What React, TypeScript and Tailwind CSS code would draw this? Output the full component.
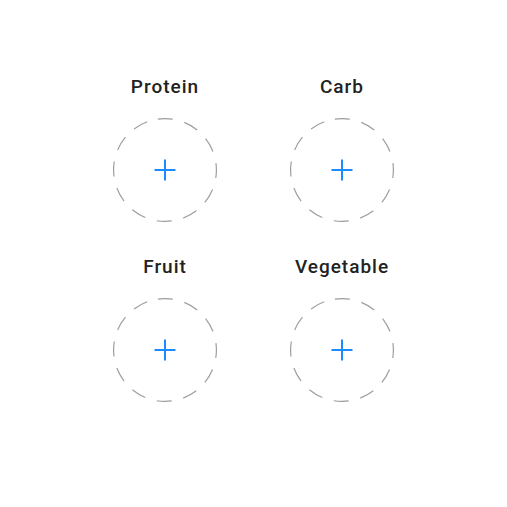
import React from "react";

const items = ["Protein", "Carb", "Fruit", "Vegetable"];

function Slot({ label }: { label: string }) {
  return (
    <div className="flex flex-col items-center">
      <div className="text-[19px] leading-[22px] font-medium tracking-[1px] text-[#222222] whitespace-nowrap">{label}</div>
      <button className="mt-[20px] w-[104px] h-[104px] relative flex items-center justify-center">
        <svg width="104" height="104" viewBox="0 0 104 104" className="absolute inset-0">
          <circle cx="52" cy="52" r="51.4" fill="none" stroke="#9e9e9e" strokeWidth="1.2" strokeDasharray="15 11.95" transform="rotate(-98 52 52)" />
        </svg>
        <svg width="24" height="24" viewBox="0 0 24 24" className="relative">
          <path d="M12 1.5V22.5M1.5 12H22.5" stroke="#1a8cff" strokeWidth="2" fill="none" />
        </svg>
      </button>
    </div>
  );
}

export default function App() {
  return (
    <div className="w-[507px] h-[507px] bg-white flex justify-center pt-[76px]" style={{ fontFamily: "Roboto, 'Noto Sans', sans-serif" }}>
      <div className="grid grid-cols-[104px_104px] gap-x-[73px] gap-y-[34px] content-start">
        {items.map((l) => (
          <Slot key={l} label={l} />
        ))}
      </div>
    </div>
  );
}
